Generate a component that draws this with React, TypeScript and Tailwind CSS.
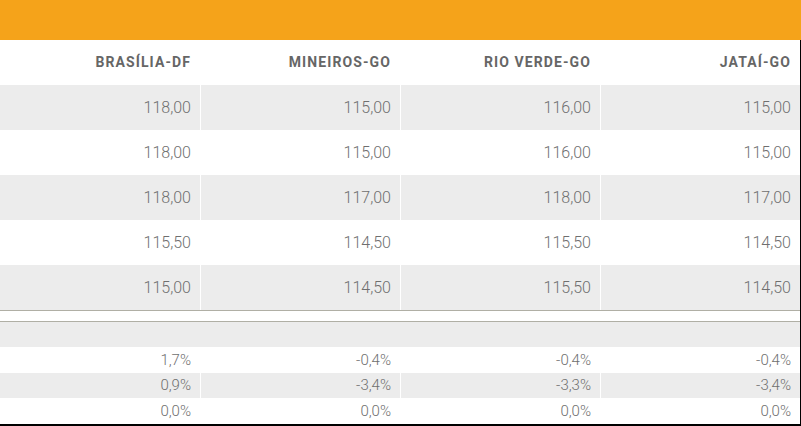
import React from 'react';

const cities = ['BRASÍLIA-DF', 'MINEIROS-GO', 'RIO VERDE-GO', 'JATAÍ-GO'];

const prices = [
  ['118,00', '115,00', '116,00', '115,00'],
  ['118,00', '115,00', '116,00', '115,00'],
  ['118,00', '117,00', '118,00', '117,00'],
  ['115,50', '114,50', '115,50', '114,50'],
  ['115,00', '114,50', '115,50', '114,50'],
];

const changes = [
  ['1,7%', '-0,4%', '-0,4%', '-0,4%'],
  ['0,9%', '-3,4%', '-3,3%', '-3,4%'],
  ['0,0%', '0,0%', '0,0%', '0,0%'],
];

const Row = ({ values, gray, tall }: { values: string[]; gray: boolean; tall: boolean }) => (
  <div className={`grid grid-cols-4 ${gray ? 'bg-[#ececec]' : 'bg-white'} ${tall ? 'h-[45px] text-[16px]' : 'h-[25.5px] text-[15px]'}`}>
    {values.map((v, i) => (
      <div
        key={i}
        className={`flex items-center justify-end pr-[9px] font-light ${i > 0 ? 'border-l border-white' : ''}`}
      >
        {v}
      </div>
    ))}
  </div>
);

const App = () => {
  return (
    <div className="w-[801px] h-[426px] overflow-hidden bg-white font-['Roboto',sans-serif] text-[#6f6f6f]">
      <div className="h-[40px] bg-[#f5a31a]" />
      <div className="w-[801px] border-r border-black">
        <div className="grid grid-cols-4 h-[45px]">
          {cities.map((c) => (
            <div
              key={c}
              className="flex items-center justify-end pr-[9px] text-[14px] font-bold tracking-[1.1px] text-[#666]"
            >
              {c}
            </div>
          ))}
        </div>
        {prices.map((r, i) => (
          <Row key={i} values={r} gray={i % 2 === 0} tall />
        ))}
        <div className="h-[11px] border-t border-[#b0afa5] bg-white" />
        <div className="h-[26px] border-t border-[#b0afa5] bg-[#ececec]" />
        {changes.map((r, i) => (
          <Row key={i} values={r} gray={i % 2 === 1} tall={false} />
        ))}
        <div className="border-b-2 border-black" />
      </div>
    </div>
  );
};

export default App;
